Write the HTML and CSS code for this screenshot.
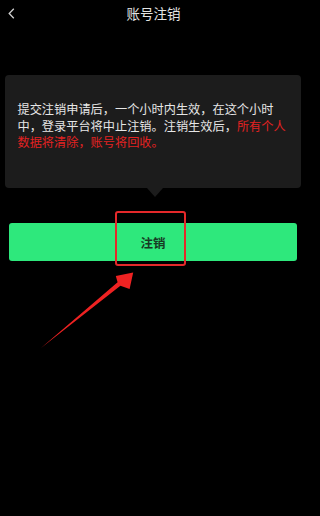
FILE: index.html
```html
<!DOCTYPE html>
<html lang="zh">
<head>
<meta charset="utf-8">
<title>账号注销</title>
<link rel="stylesheet" href="styles.css">
</head>
<body>
<div class="page">
  <header class="header">
    <span class="back">
      <svg width="7" height="11" viewBox="0 0 7 11"><path d="M5.8 0.8 L1.2 5.5 L5.8 10.2" fill="none" stroke="#cfcfcf" stroke-width="1.3"/></svg>
    </span>
    <h1 class="title">账号注销</h1>
    <span></span>
  </header>
  <div class="tip">
    <p class="tip-text">提交注销申请后，一个小时内生效，在这个小时中，登录平台将中止注销。注销生效后，<span class="warn">所有个人数据将清除，账号将回收。</span></p>
  </div>
  <button class="btn">注销</button>
  <div class="mark"></div>
  <svg class="pointer" width="307" height="516" viewBox="0 0 307 516">
    <polygon points="41,348 117.6,282.2 115.8,276 133.2,272.4 129.6,289 120.4,285.8" fill="#ee2222"/>
  </svg>
</div>
</body>
</html>
```
FILE: styles.css
```css
* { box-sizing: border-box; }
html, body {
  margin: 0;
  padding: 0;
  background: #000;
}
body {
  font-family: "Noto Sans CJK SC", "Noto Sans", sans-serif;
  width: 307px;
  height: 516px;
  overflow: hidden;
}
.page {
  position: relative;
  width: 307px;
  height: 516px;
  display: flex;
  flex-direction: column;
}
.header {
  height: 27px;
  display: grid;
  grid-template-columns: 40px 1fr 40px;
  align-items: center;
}
.back {
  display: flex;
  padding-left: 8px;
  padding-top: 0;
}
.back svg { display: block; }
.title {
  margin: 0;
  font-size: 13.5px;
  font-weight: normal;
  line-height: 27px;
  color: #e4e4e4;
  text-align: center;
}
.tip {
  position: relative;
  margin: 48px 0 0 5px;
  width: 296px;
  height: 113px;
  background: #1c1c1c;
  border-radius: 4px;
  padding: 26px 12px 0 12.5px;
}
.tip::after {
  content: "";
  position: absolute;
  left: 142px;
  bottom: -9px;
  border-left: 8px solid transparent;
  border-right: 8px solid transparent;
  border-top: 9px solid #1c1c1c;
}
.tip-text {
  margin: 0;
  font-size: 12.2px;
  line-height: 16.6px;
  color: #e6e6e6;
  line-break: strict;
}
.warn {
  color: #e32222;
}
.btn {
  margin: 35px 0 0 9px;
  width: 288px;
  height: 38px;
  border: none;
  border-radius: 3px;
  background: #2ee87c;
  font-family: "Noto Sans CJK SC", "Noto Sans", sans-serif;
  font-size: 12.5px;
  font-weight: bold;
  color: #173a24;
  padding: 0;
}
.mark {
  position: absolute;
  left: 115px;
  top: 211px;
  width: 71px;
  height: 55px;
  border: 2px solid #e5282a;
  border-radius: 3px;
}
.pointer {
  position: absolute;
  left: 0;
  top: 0;
  pointer-events: none;
}
```
